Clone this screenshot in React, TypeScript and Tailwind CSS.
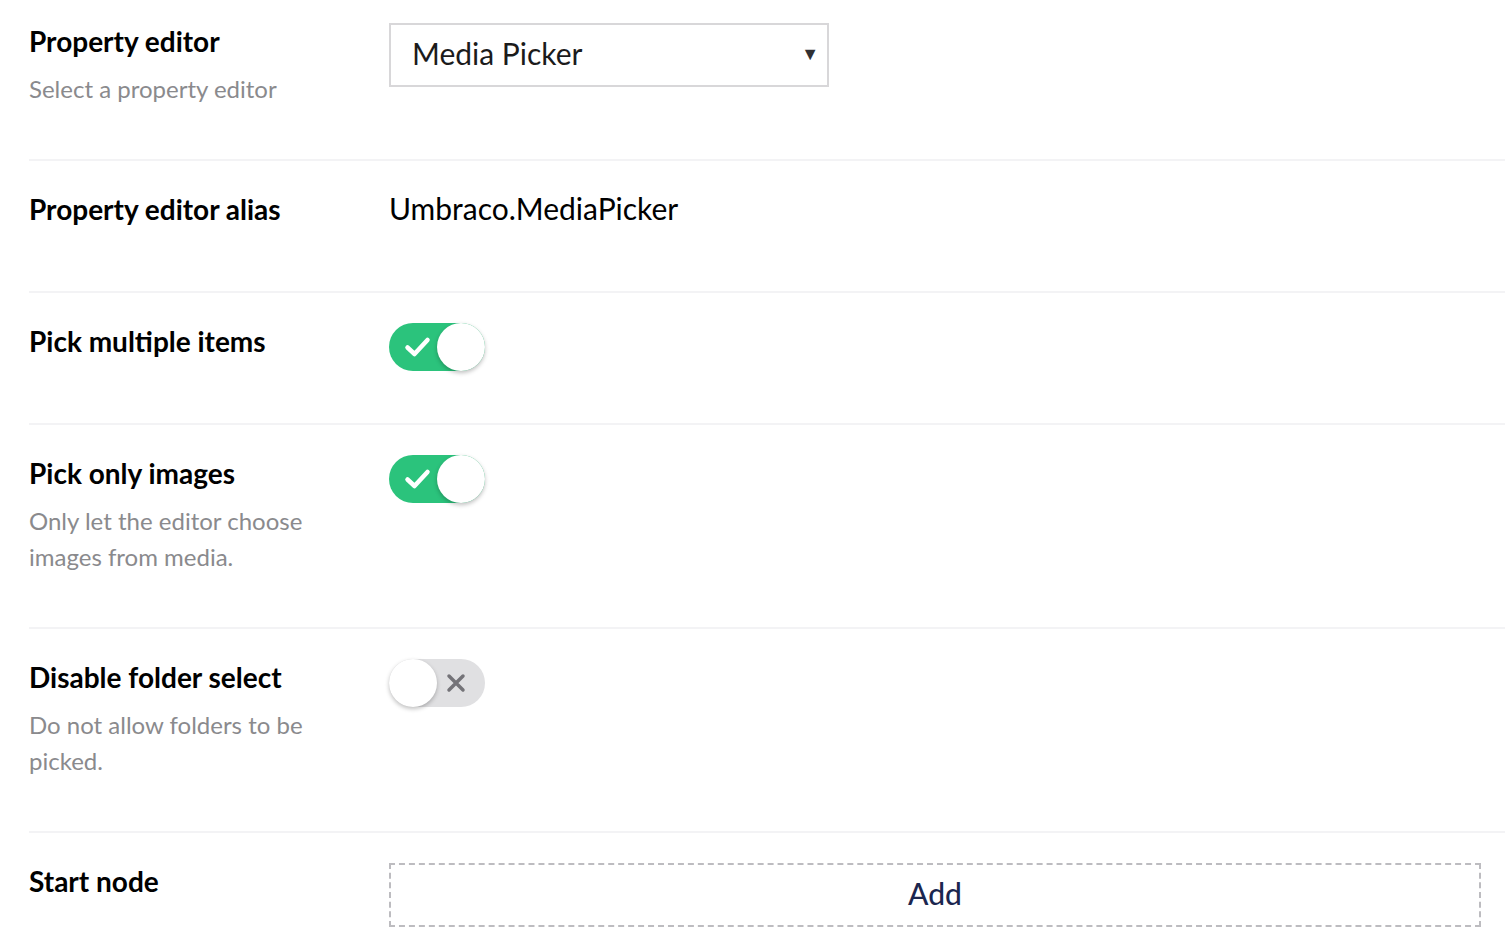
import React from "react";

type Row = {
  label: string;
  description?: string;
  control: React.ReactNode;
  first?: boolean;
  last?: boolean;
};

const Toggle = ({ on }: { on: boolean }) => (
  <div
    className={`relative h-12 w-24 rounded-full ${
      on ? "bg-[#2bc37c]" : "bg-[#e0e0e2]"
    }`}
  >
    {on ? (
      <svg
        className="absolute left-[15px] top-[13px] h-[22px] w-[27px]"
        viewBox="0 0 27 22"
        fill="none"
      >
        <path
          d="M3.5 11.5 L10.5 18 L23.5 4"
          stroke="white"
          strokeWidth={4.5}
          strokeLinecap="round"
          strokeLinejoin="round"
        />
      </svg>
    ) : (
      <svg
        className="absolute left-[57px] top-[14px] h-5 w-5"
        viewBox="0 0 20 20"
        fill="none"
      >
        <path
          d="M3 3 L17 17 M17 3 L3 17"
          stroke="#747378"
          strokeWidth={3.5}
          strokeLinecap="round"
        />
      </svg>
    )}
    <div
      className={`absolute top-0 h-12 w-12 rounded-full bg-white shadow-[0_2px_4px_rgba(0,0,0,0.25)] ${
        on ? "right-0" : "left-0"
      }`}
    />
  </div>
);

const rows: Row[] = [
  {
    label: "Property editor",
    description: "Select a property editor",
    first: true,
    control: (
      <div className="flex h-16 w-[440px] items-center justify-between border-2 border-[#d8d7d9] bg-white pb-1 pl-[21px] pr-[8px]">
        <span className="text-[30px] text-[#1b1b1b]">Media Picker</span>
        <span className="text-[18px] text-[#303033]">▼</span>
      </div>
    ),
  },
  {
    label: "Property editor alias",
    control: (
      <div className="-mt-px text-[30px] leading-9 text-[#000]">Umbraco.MediaPicker</div>
    ),
  },
  { label: "Pick multiple items", control: <Toggle on /> },
  {
    label: "Pick only images",
    description: "Only let the editor choose images from media.",
    control: <Toggle on />,
  },
  {
    label: "Disable folder select",
    description: "Do not allow folders to be picked.",
    control: <Toggle on={false} />,
  },
  {
    label: "Start node",
    last: true,
    control: (
      <div className="flex h-16 w-[1092px] items-center justify-center border-2 border-dashed border-[#bdbcc0] pb-1 text-[30px] font-medium text-[#1b264f]">
        Add
      </div>
    ),
  },
];

export default function App() {
  return (
    <div
      className="min-h-screen overflow-hidden bg-white pl-[29px]"
      style={{ fontFamily: "Lato, 'Open Sans', sans-serif" }}
    >
      {rows.map((row) => (
        <div
          key={row.label}
          className={`flex ${row.first ? "pt-[23px]" : "pt-[30px]"} ${
            row.last ? "" : "border-b-2 border-[#f3f3f5] pb-[52px]"
          }`}
        >
          <div className="w-[360px] shrink-0">
            <div className="mb-3 text-[28px] font-bold leading-9 text-black">
              {row.label}
            </div>
            {row.description && (
              <div className="max-w-[300px] text-[24px] leading-9 text-[#8a8a8d]">
                {row.description}
              </div>
            )}
          </div>
          <div>{row.control}</div>
        </div>
      ))}
    </div>
  );
}
